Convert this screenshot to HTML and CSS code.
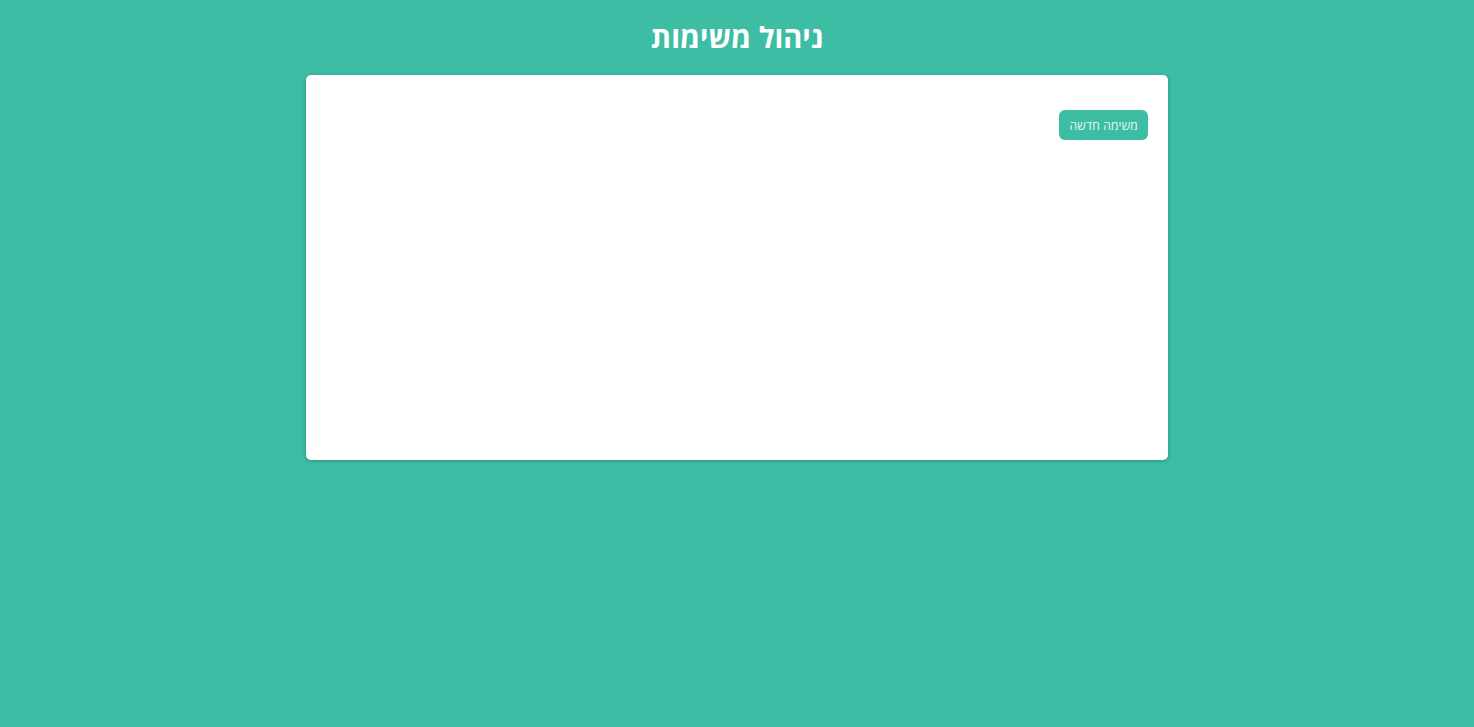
FILE: index.html
```html
<!DOCTYPE html>
<html lang="he" dir="rtl">
<head>
<meta charset="utf-8">
<title>ניהול משימות</title>
<link rel="stylesheet" href="styles.css">
</head>
<body>
<h1 class="title">ניהול משימות</h1>
<main class="card">
  <div class="toolbar">
    <button class="btn-new" type="button">משימה חדשה</button>
  </div>
</main>
</body>
</html>
```
FILE: styles.css
```css
html, body {
  margin: 0;
  padding: 0;
}
body {
  background: #3ebda5;
  font-family: "Open Sans", "Liberation Sans", "DejaVu Sans", sans-serif;
  direction: rtl;
  min-height: 100vh;
}
.title {
  margin: 0;
  padding-top: 16px;
  height: 59px;
  box-sizing: border-box;
  text-align: center;
  color: #ffffff;
  font-size: 29px;
  font-weight: 700;
  line-height: 41px;
}
.card {
  width: 862px;
  height: 385px;
  margin: 16px auto 0;
  box-sizing: border-box;
  background: #ffffff;
  border-radius: 5px;
  box-shadow: 0 1px 4px rgba(0, 0, 0, 0.25);
  padding: 35px 20px 20px;
}
.toolbar {
  display: flex;
  justify-content: flex-start;
}
.btn-new {
  height: 30px;
  padding: 0 10px;
  border: none;
  border-radius: 6px;
  background: #3ebda5;
  color: #eaf7f3;
  font-family: "Open Sans", "Liberation Sans", "DejaVu Sans", sans-serif;
  font-size: 12px;
  letter-spacing: 0.2px;
  cursor: pointer;
}
```
